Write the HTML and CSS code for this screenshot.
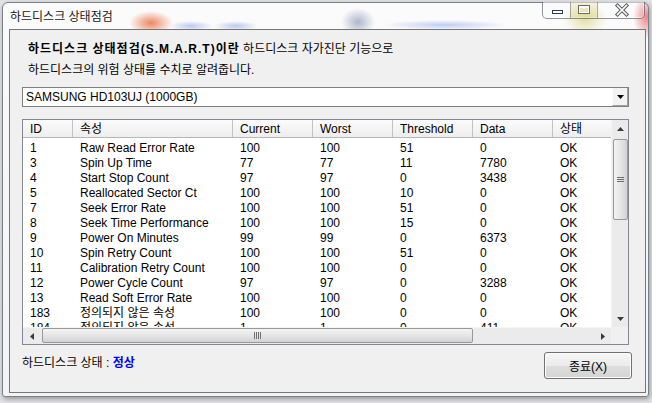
FILE: index.html
```html
<!DOCTYPE html>
<html lang="ko">
<head>
<meta charset="utf-8">
<title>하드디스크 상태점검</title>
<link rel="stylesheet" href="styles.css">
</head>
<body>
<div class="window">
  <div class="titlebar">
    <span class="title">하드디스크 상태점검</span>
    <div class="caption">
      <div class="cbtn cmin">
        <svg width="27" height="16" viewBox="0 0 27 16"><rect x="9.5" y="8.5" width="10" height="3" fill="#fff" stroke="#2c3b55"/></svg>
      </div>
      <div class="cbtn cmax">
        <svg width="26" height="16" viewBox="0 0 26 16"><rect x="7.5" y="3.5" width="11" height="8" fill="none" stroke="#6a6a70"/><rect x="8.5" y="5.5" width="9" height="5" fill="none" stroke="#fff"/><line x1="8" y1="4.5" x2="18" y2="4.5" stroke="#fff"/></svg>
      </div>
      <div class="cbtn cclose">
        <svg width="46" height="16" viewBox="0 0 46 16"><path d="M19.5 3.5 L28.5 12.5 M28.5 3.5 L19.5 12.5" stroke="#55585e" stroke-width="3.6" stroke-linecap="square"/><path d="M19.5 3.5 L28.5 12.5 M28.5 3.5 L19.5 12.5" stroke="#fff" stroke-width="1.6" stroke-linecap="square"/></svg>
      </div>
    </div>
  </div>

  <div class="client">
    <p class="intro"><b>하드디스크 상태점검(S.M.A.R.T)이란</b> 하드디스크 자가진단 기능으로<br>하드디스크의 위험 상태를 수치로 알려줍니다.</p>

    <div class="combo">
      <span class="combo-text">SAMSUNG HD103UJ (1000GB)</span>
      <div class="drop">
        <svg width="7" height="4" viewBox="0 0 7 4"><path d="M0 0 H7 L3.5 4 Z" fill="#000"/></svg>
      </div>
    </div>

    <div class="list">
      <div class="viewport">
        <div class="hdr">
          <span class="c1">ID</span><span class="c2">속성</span><span class="c3">Current</span><span class="c3">Worst</span><span class="c3">Threshold</span><span class="c3">Data</span><span class="c3">상태</span>
        </div>
        <div class="rows">
          <div class="row"><span class="c1">1</span><span class="c2">Raw Read Error Rate</span><span class="c3">100</span><span class="c3">100</span><span class="c3">51</span><span class="c3">0</span><span class="c3">OK</span></div>
          <div class="row"><span class="c1">3</span><span class="c2">Spin Up Time</span><span class="c3">77</span><span class="c3">77</span><span class="c3">11</span><span class="c3">7780</span><span class="c3">OK</span></div>
          <div class="row"><span class="c1">4</span><span class="c2">Start Stop Count</span><span class="c3">97</span><span class="c3">97</span><span class="c3">0</span><span class="c3">3438</span><span class="c3">OK</span></div>
          <div class="row"><span class="c1">5</span><span class="c2">Reallocated Sector Ct</span><span class="c3">100</span><span class="c3">100</span><span class="c3">10</span><span class="c3">0</span><span class="c3">OK</span></div>
          <div class="row"><span class="c1">7</span><span class="c2">Seek Error Rate</span><span class="c3">100</span><span class="c3">100</span><span class="c3">51</span><span class="c3">0</span><span class="c3">OK</span></div>
          <div class="row"><span class="c1">8</span><span class="c2">Seek Time Performance</span><span class="c3">100</span><span class="c3">100</span><span class="c3">15</span><span class="c3">0</span><span class="c3">OK</span></div>
          <div class="row"><span class="c1">9</span><span class="c2">Power On Minutes</span><span class="c3">99</span><span class="c3">99</span><span class="c3">0</span><span class="c3">6373</span><span class="c3">OK</span></div>
          <div class="row"><span class="c1">10</span><span class="c2">Spin Retry Count</span><span class="c3">100</span><span class="c3">100</span><span class="c3">51</span><span class="c3">0</span><span class="c3">OK</span></div>
          <div class="row"><span class="c1">11</span><span class="c2">Calibration Retry Count</span><span class="c3">100</span><span class="c3">100</span><span class="c3">0</span><span class="c3">0</span><span class="c3">OK</span></div>
          <div class="row"><span class="c1">12</span><span class="c2">Power Cycle Count</span><span class="c3">97</span><span class="c3">97</span><span class="c3">0</span><span class="c3">3288</span><span class="c3">OK</span></div>
          <div class="row"><span class="c1">13</span><span class="c2">Read Soft Error Rate</span><span class="c3">100</span><span class="c3">100</span><span class="c3">0</span><span class="c3">0</span><span class="c3">OK</span></div>
          <div class="row"><span class="c1">183</span><span class="c2">정의되지 않은 속성</span><span class="c3">100</span><span class="c3">100</span><span class="c3">0</span><span class="c3">0</span><span class="c3">OK</span></div>
          <div class="row"><span class="c1">184</span><span class="c2">정의되지 않은 속성</span><span class="c3">1</span><span class="c3">1</span><span class="c3">0</span><span class="c3">411</span><span class="c3">OK</span></div>
        </div>
      </div>

      <div class="vscroll">
        <div class="sarrow">
          <svg width="7" height="4" viewBox="0 0 7 4"><path d="M3.5 0 L7 4 H0 Z" fill="#3a3a3a"/></svg>
        </div>
        <div class="vtrack">
          <div class="vthumb">
            <svg width="7" height="6" viewBox="0 0 7 6"><path d="M0 0.5H7M0 2.5H7M0 4.5H7" stroke="#6e6e6e"/></svg>
          </div>
        </div>
        <div class="sarrow">
          <svg width="7" height="4" viewBox="0 0 7 4"><path d="M0 0 H7 L3.5 4 Z" fill="#3a3a3a"/></svg>
        </div>
      </div>

      <div class="hscroll">
        <div class="sarrow">
          <svg width="4" height="7" viewBox="0 0 4 7"><path d="M0 3.5 L4 0 V7 Z" fill="#3a3a3a"/></svg>
        </div>
        <div class="htrack">
          <div class="hthumb">
            <svg width="8" height="7" viewBox="0 0 8 7"><path d="M0.5 0V7M2.5 0V7M4.5 0V7M6.5 0V7" stroke="#6e6e6e"/></svg>
          </div>
        </div>
        <div class="sarrow">
          <svg width="4" height="7" viewBox="0 0 4 7"><path d="M4 3.5 L0 0 V7 Z" fill="#3a3a3a"/></svg>
        </div>
      </div>
      <div class="corner"></div>
    </div>

    <div class="footer">
      <div class="status">하드디스크 상태 : <b class="ok">정상</b></div>
      <button class="btn" type="button">종료(X)</button>
    </div>
  </div>
</div>
</body>
</html>
```

FILE: styles.css
```css
* { box-sizing: border-box; }
html, body { margin: 0; padding: 0; }

body {
  width: 652px;
  height: 403px;
  overflow: hidden;
  background: #e2e3e6;
  font-family: "Liberation Sans", "Noto Sans CJK KR", sans-serif;
  font-size: 12px;
  color: #000;
}

.window {
  margin: 2px 0 0 2px;
  width: 647px;
  height: 395px;
  border: 1px solid #7a7f88;
  border-radius: 6px 6px 3px 3px;
  box-shadow: 1px 2px 5px rgba(0, 0, 0, 0.35);
  display: flex;
  flex-direction: column;
  background:
    radial-gradient(ellipse 22px 12px at 148px 20px, rgba(236, 104, 56, 0.8), rgba(236, 104, 56, 0) 100%),
    radial-gradient(ellipse 22px 5px at 188px 23px, rgba(110, 140, 220, 0.45), rgba(110, 140, 220, 0) 100%),
    radial-gradient(ellipse 22px 5px at 233px 23px, rgba(110, 140, 220, 0.45), rgba(110, 140, 220, 0) 100%),
    radial-gradient(ellipse 17px 14px at 355px 19px, rgba(80, 100, 140, 0.45), rgba(80, 100, 140, 0) 100%),
    radial-gradient(ellipse 62px 5px at 442px 22px, rgba(120, 150, 230, 0.45), rgba(120, 150, 230, 0) 100%),
    radial-gradient(ellipse 22px 16px at 582px 16px, rgba(200, 190, 60, 0.45), rgba(200, 190, 60, 0) 100%),
    radial-gradient(ellipse 14px 22px at 644px 14px, rgba(232, 70, 70, 0.65), rgba(232, 70, 70, 0) 100%),
    linear-gradient(#fbfbfc, #f1f3f6);
}

/* ---------- title bar ---------- */
.titlebar {
  height: 26px;
  flex: none;
  display: flex;
  justify-content: space-between;
  align-items: flex-start;
  padding-left: 7px;
}

.title {
  margin-top: 7px;
  font-family: "Noto Sans CJK KR", sans-serif;
  font-size: 12px;
  line-height: 12px;
  color: #161620;
  text-shadow: 0 0 5px #fff, 0 0 3px #fff;
}

.caption {
  margin-top: -1px;
  margin-right: 3px;
  display: flex;
  height: 17px;
  border: 1px solid rgba(70, 78, 90, 0.6);
  border-top: none;
  border-radius: 0 0 5px 5px;
  overflow: hidden;
  box-shadow: inset 0 0 0 1px rgba(255, 255, 255, 0.5);
}

.cbtn {
  height: 16px;
  display: flex;
}

.cmin { width: 27px; }
.cmax {
  width: 27px;
  border-left: 1px solid rgba(70, 78, 90, 0.45);
  background: linear-gradient(rgba(240, 200, 120, 0.25), rgba(200, 200, 80, 0.25));
}
.cclose {
  width: 47px;
  border-left: 1px solid rgba(70, 78, 90, 0.45);
}

/* ---------- client ---------- */
.client {
  height: 364px;
  flex: none;
  margin: 0 2px 0 6px;
  border: 1px solid #767676;
  background: #f0f0f0;
  padding: 9px 16px 0 12px;
  display: flex;
  flex-direction: column;
}

.intro {
  margin: 0;
  padding-left: 6px;
  font-size: 12px;
  line-height: 21px;
}

.intro b {
  letter-spacing: 1px;
}

/* ---------- combo ---------- */
.combo {
  margin-top: 6px;
  height: 20px;
  flex: none;
  border: 1px solid #7f7f7f;
  background: #fff;
  display: flex;
  justify-content: space-between;
}

.combo-text {
  padding-left: 3px;
  line-height: 19px;
  font-size: 12px;
}

.drop {
  width: 16px;
  height: 18px;
  background: #f3f3f3;
  border-left: 1px solid #fcfcfc;
  border-right: 1px solid #a0a0a0;
  border-bottom: 1px solid #a0a0a0;
  display: flex;
  align-items: center;
  justify-content: center;
}

/* ---------- list ---------- */
.list {
  margin-top: 12px;
  height: 226px;
  flex: none;
  border: 1px solid #828790;
  background: #fff;
  display: grid;
  grid-template-columns: 1fr 17px;
  grid-template-rows: 1fr 17px;
}

.viewport {
  overflow: hidden;
  min-width: 0;
}

.hdr {
  display: flex;
  height: 18px;
  width: 610px;
  border-bottom: 1px solid #b6b6b6;
  background: linear-gradient(#fbfbfb, #eeeeee);
}

.hdr span {
  flex: none;
  padding-left: 7px;
  padding-top: 1px;
  line-height: 17px;
  border-right: 1px solid #c2c2c2;
  white-space: nowrap;
}

.rows {
  padding-top: 3px;
  width: 610px;
}

.row {
  display: flex;
  height: 15px;
}

.row span {
  flex: none;
  padding-left: 7px;
  line-height: 15px;
  white-space: nowrap;
}

.c1 { width: 50px; }
.c2 { width: 160px; }
.c3 { width: 80px; }

/* scrollbars */
.vscroll {
  display: flex;
  flex-direction: column;
  background: #ebebeb;
  border-left: 1px solid #f4f4f4;
}

.sarrow {
  flex: none;
  width: 17px;
  height: 17px;
  display: flex;
  align-items: center;
  justify-content: center;
}

.vtrack {
  flex: 1;
  padding-top: 2px;
}

.vthumb {
  margin-left: 1px;
  width: 15px;
  height: 81px;
  border: 1px solid #989898;
  border-radius: 2px;
  background: linear-gradient(90deg, #f4f4f4, #e2e2e2 60%, #d2d2d2);
  display: flex;
  align-items: center;
  justify-content: center;
}

.hscroll {
  display: flex;
  background: #ebebeb;
  border-top: 1px solid #f4f4f4;
}

.htrack {
  flex: 1;
  padding-left: 2px;
}

.hthumb {
  width: 431px;
  height: 15px;
  border: 1px solid #989898;
  border-radius: 2px;
  background: linear-gradient(#f4f4f4, #e2e2e2 60%, #d2d2d2);
  display: flex;
  align-items: center;
  justify-content: center;
}

.corner {
  background: #f0f0f0;
}

/* ---------- footer ---------- */
.footer {
  margin-top: 7px;
  margin-right: -3px;
  display: flex;
  justify-content: space-between;
  align-items: flex-start;
}

.status {
  padding-top: 3px;
  line-height: 16px;
  font-size: 12px;
}

.ok {
  color: #0000ff;
}

.btn {
  width: 88px;
  height: 27px;
  margin: 0;
  padding: 0;
  border: 1px solid #707070;
  border-radius: 3px;
  background: linear-gradient(#f6f6f6, #ebebeb 50%, #dedede 51%, #d4d4d4);
  box-shadow: inset 0 0 0 1px #fcfcfc;
  font-family: "Liberation Sans", "Noto Sans CJK KR", sans-serif;
  font-size: 12px;
  color: #000;
}
```
